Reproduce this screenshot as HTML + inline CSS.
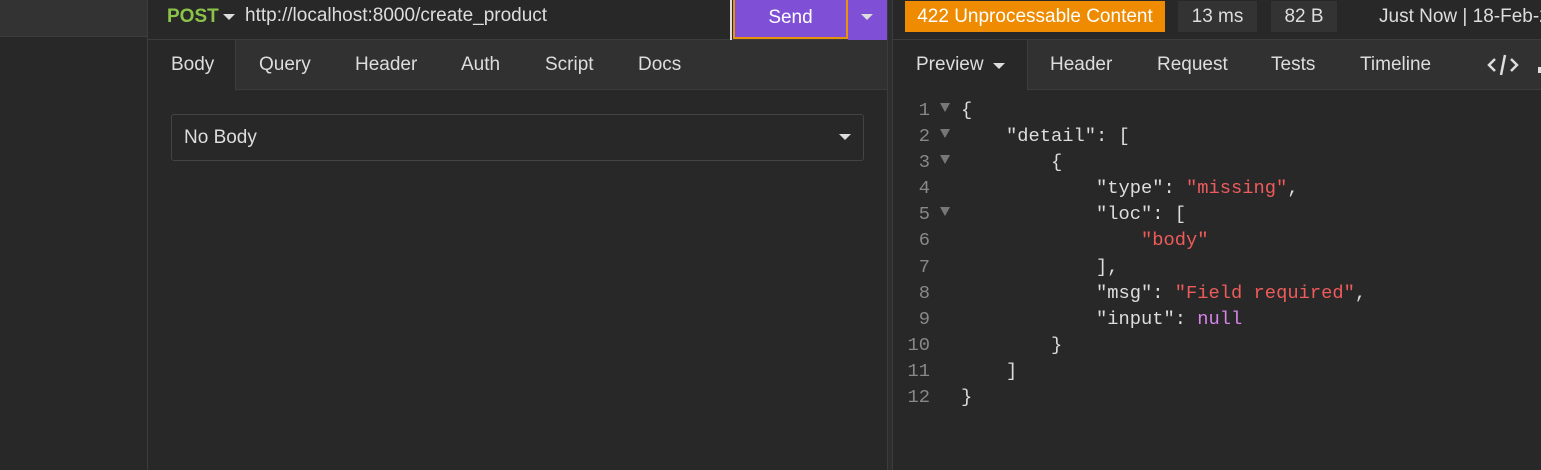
<!DOCTYPE html>
<html><head><style>
*{margin:0;padding:0;box-sizing:border-box}
body{width:1541px;height:470px;background:#282828;font-family:"Liberation Sans",sans-serif;color:#ddd;position:relative;overflow:hidden}
.a{position:absolute}
.tab{position:absolute;top:54px;font-size:19px;color:#ddd}
.code{position:absolute;left:893px;top:97px;font-family:"Liberation Mono",monospace;font-size:18.75px;color:#ddd}
.code div{height:26.1px;line-height:26.1px;white-space:pre;position:relative}
.n{display:inline-block;width:37px;text-align:right;color:#888}
.ar{display:inline-block;width:31px;position:relative}
.ar.t:after{content:"";position:absolute;left:10px;top:-12px;border-left:5px solid transparent;border-right:5px solid transparent;border-top:9px solid #777}
.s{color:#ef5b5b}.k{color:#d783ea}
.tri{position:absolute;width:0;height:0;border-left:6px solid transparent;border-right:6px solid transparent;border-top:6px solid #ddd}
</style></head><body>
<div class="a" style="left:0;top:0;width:147px;height:37px;background:#333;border-bottom:1px solid #3c3c3c"></div>
<div class="a" style="left:147px;top:0;width:1px;height:470px;background:#3c3c3c"></div>
<div class="a" style="left:887px;top:0;width:6px;height:470px;background:#2e2e2e;border-left:1px solid #3c3c3c;border-right:1px solid #3c3c3c"></div>
<div class="a" style="left:148px;top:39px;width:739px;height:1px;background:#3c3c3c"></div>
<div class="a" style="left:167px;top:6px;font-size:19px;color:#8bc34a;font-weight:bold">POST</div>
<div class="tri" style="left:223px;top:14px"></div>
<div class="a" style="left:245px;top:5px;font-size:19px;color:#ddd">http://localhost:8000/create_product</div>
<div class="a" style="left:730px;top:0;width:2px;height:40px;background:#ddd"></div>
<div class="a" style="left:733px;top:0;width:115px;height:39px;background:#7f4fd6;border:2px solid #e8930c;border-top:none;color:#fff;font-size:19px;text-align:center;line-height:35px">Send</div>
<div class="a" style="left:848px;top:0;width:39px;height:40px;background:#7f4fd6"></div>
<div class="tri" style="left:861px;top:14px"></div>
<div class="a" style="left:236px;top:40px;width:651px;height:50px;background:#313131;border-bottom:1px solid #3c3c3c"></div>
<div class="a" style="left:235px;top:40px;width:1px;height:51px;background:#3c3c3c"></div>
<div class="tab" style="left:171px">Body</div>
<div class="tab" style="left:259px">Query</div>
<div class="tab" style="left:355px">Header</div>
<div class="tab" style="left:461px">Auth</div>
<div class="tab" style="left:545px">Script</div>
<div class="tab" style="left:638px">Docs</div>
<div class="a" style="left:171px;top:114px;width:693px;height:47px;border:1px solid #444;border-radius:3px;background:#282828"></div>
<div class="a" style="left:184px;top:127px;font-size:19px">No Body</div>
<div class="tri" style="left:839px;top:134px"></div>
<div class="a" style="left:893px;top:39px;width:648px;height:1px;background:#3c3c3c"></div>
<div class="a" style="left:905px;top:1px;width:260px;height:31px;background:#ee8b00;color:#fff;font-size:19px;text-align:center;line-height:31px">422 Unprocessable Content</div>
<div class="a" style="left:1178px;top:1px;width:79px;height:31px;background:#333;font-size:19px;text-align:center;line-height:31px">13 ms</div>
<div class="a" style="left:1271px;top:1px;width:66px;height:31px;background:#333;font-size:19px;text-align:center;line-height:31px">82 B</div>
<div class="a" style="left:1379px;top:6px;font-size:19px;white-space:nowrap">Just Now | 18-Feb-2</div>
<div class="a" style="left:1027px;top:40px;width:514px;height:50px;background:#313131;border-bottom:1px solid #3c3c3c;border-left:1px solid #3c3c3c"></div>
<div class="tab" style="left:916px">Preview</div>
<div class="tri" style="left:993px;top:63px"></div>
<div class="tab" style="left:1050px">Header</div>
<div class="tab" style="left:1157px">Request</div>
<div class="tab" style="left:1271px">Tests</div>
<div class="tab" style="left:1360px">Timeline</div>
<svg class="a" style="left:1486px;top:52px" width="34" height="26" viewBox="0 0 34 26"><path d="M9 7 L3 13 L9 19 M25 7 L31 13 L25 19 M19 3 L15 23" stroke="#ddd" stroke-width="2.5" fill="none"/></svg>
<div class="a" style="left:1538px;top:67px;width:3px;height:6px;background:#ddd"></div>
<div class="code">
<div><span class="n">1</span><span class="ar t"></span>{</div>
<div><span class="n">2</span><span class="ar t"></span>    "detail": [</div>
<div><span class="n">3</span><span class="ar t"></span>        {</div>
<div><span class="n">4</span><span class="ar"></span>            "type": <span class="s">"missing"</span>,</div>
<div><span class="n">5</span><span class="ar t"></span>            "loc": [</div>
<div><span class="n">6</span><span class="ar"></span>                <span class="s">"body"</span></div>
<div><span class="n">7</span><span class="ar"></span>            ],</div>
<div><span class="n">8</span><span class="ar"></span>            "msg": <span class="s">"Field required"</span>,</div>
<div><span class="n">9</span><span class="ar"></span>            "input": <span class="k">null</span></div>
<div><span class="n">10</span><span class="ar"></span>        }</div>
<div><span class="n">11</span><span class="ar"></span>    ]</div>
<div><span class="n">12</span><span class="ar"></span>}</div>
</div>
</body></html>
